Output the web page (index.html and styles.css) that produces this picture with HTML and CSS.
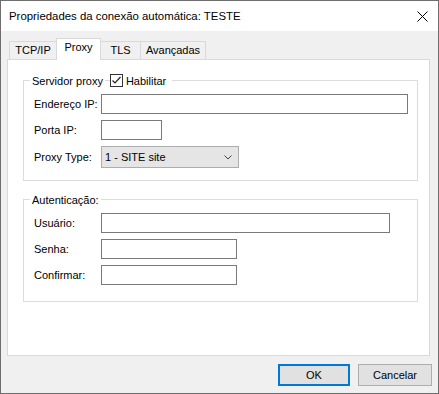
FILE: index.html
```html
<!DOCTYPE html>
<html lang="pt">
<head>
    <meta charset="UTF-8">
    <title>Propriedades da conexão automática: TESTE</title>
    <link rel="stylesheet" href="styles.css">
</head>
<body>
<div class="window">
    <div class="titlebar">
        <span class="title">Propriedades da conexão automática: TESTE</span>
        <svg class="close" width="11" height="11" viewBox="0 0 11 11">
            <path d="M0.5 0.5 L10.5 10.5 M10.5 0.5 L0.5 10.5" stroke="#000" stroke-width="1" fill="none"/>
        </svg>
    </div>
    <div class="client">
        <div class="tabs">
            <div class="tab tab-first">TCP/IP</div>
            <div class="tab tab-active">Proxy</div>
            <div class="tab tab-tls">TLS</div>
            <div class="tab tab-adv">Avançadas</div>
        </div>
        <div class="panel">
            <div class="group group-proxy">
                <div class="legend">
                    <span class="legend-text">Servidor proxy</span>
                    <span class="check">
                        <svg width="13" height="13" viewBox="0 0 13 13">
                            <rect x="0.5" y="0.5" width="12" height="12" fill="#fff" stroke="#333"/>
                            <polyline points="2.5,6.5 5,9 10.5,3" fill="none" stroke="#222" stroke-width="1.2"/>
                        </svg>
                        <span class="check-label">Habilitar</span>
                    </span>
                </div>
                <div class="row">
                    <label class="lbl">Endereço IP:</label>
                    <input class="edit edit-ip" type="text">
                </div>
                <div class="row">
                    <label class="lbl">Porta IP:</label>
                    <input class="edit edit-port" type="text">
                </div>
                <div class="row">
                    <label class="lbl">Proxy Type:</label>
                    <div class="combo">
                        <span>1 - SITE site</span>
                        <svg width="8" height="5" viewBox="0 0 8 5">
                            <polyline points="0.5,0.5 4,4 7.5,0.5" fill="none" stroke="#444" stroke-width="1"/>
                        </svg>
                    </div>
                </div>
            </div>
            <div class="group group-auth">
                <div class="legend">
                    <span class="legend-text">Autenticação:</span>
                </div>
                <div class="row">
                    <label class="lbl">Usuário:</label>
                    <input class="edit edit-user" type="text">
                </div>
                <div class="row">
                    <label class="lbl">Senha:</label>
                    <input class="edit edit-short" type="password">
                </div>
                <div class="row">
                    <label class="lbl">Confirmar:</label>
                    <input class="edit edit-short" type="password">
                </div>
            </div>
        </div>
        <div class="footer">
            <button class="btn btn-default">OK</button>
            <button class="btn btn-cancel">Cancelar</button>
        </div>
    </div>
</div>
</body>
</html>
```

FILE: styles.css
```css
* {
    box-sizing: border-box;
}
body {
    margin: 0;
    font-family: 'Liberation Sans', Arial, sans-serif;
    font-size: 11px;
    color: #000;
}
.window {
    width: 439px;
    height: 394px;
    border: 1px solid #6e6e6e;
    background-color: #f0f0f0;
    display: flex;
    flex-direction: column;
}
.titlebar {
    height: 30px;
    background-color: #fff;
    display: flex;
    align-items: center;
    justify-content: space-between;
    padding: 0 10px 0 8px;
}
.title {
    font-size: 11.4px;
}
.client {
    flex: 1;
    padding-top: 7px;
}
.tabs {
    display: flex;
    align-items: flex-end;
    height: 21px;
    padding-left: 8px;
}
.tab {
    height: 18px;
    border-top: 1px solid #d9d9d9;
    text-align: center;
    line-height: 16px;
    background-color: #f0f0f0;
}
.tab-first {
    width: 47px;
    border-left: 1px solid #d9d9d9;
}
.tab-active {
    position: relative;
    width: 45px;
    height: 22px;
    margin-bottom: -1px;
    border-left: 1px solid #d9d9d9;
    border-right: 1px solid #d9d9d9;
    background-color: #fff;
    line-height: 17px;
}
.tab-tls {
    width: 40px;
    border-right: 1px solid #d9d9d9;
}
.tab-adv {
    width: 65px;
    border-right: 1px solid #d9d9d9;
}
.panel {
    width: 423px;
    height: 297px;
    margin-left: 6px;
    border: 1px solid #d9d9d9;
    background-color: #fff;
    padding-top: 20px;
    padding-left: 15px;
}
.group {
    position: relative;
    width: 395px;
    border: 1px solid #dcdcdc;
    padding-left: 10px;
    display: flex;
    flex-direction: column;
    gap: 6px;
}
.group-proxy {
    height: 101px;
    padding-top: 13px;
}
.group-auth {
    height: 103px;
    margin-top: 18px;
    padding-top: 13px;
}
.legend {
    position: absolute;
    top: -8px;
    left: 6px;
    display: flex;
    align-items: center;
    height: 15px;
}
.legend-text {
    background-color: #fff;
    padding: 0 2px;
}
.check {
    display: flex;
    align-items: center;
    background-color: #fff;
    margin-left: 5px;
    padding-right: 6px;
}
.check svg {
    display: block;
}
.check-label {
    margin-left: 3px;
}
.row {
    display: flex;
    align-items: center;
}
.lbl {
    width: 67px;
}
.edit {
    height: 20px;
    border: 1px solid #7a7a7a;
    margin: 0;
    padding: 0 3px;
    font: inherit;
    background-color: #fff;
    outline: none;
}
.edit-ip {
    width: 307px;
}
.edit-port {
    width: 61px;
}
.edit-user {
    width: 289px;
}
.edit-short {
    width: 136px;
}
.combo {
    width: 138px;
    height: 22px;
    border: 1px solid #adadad;
    background-color: #e5e5e5;
    display: flex;
    align-items: center;
    justify-content: space-between;
    padding: 0 6px 0 3px;
}
.combo svg {
    display: block;
}
.footer {
    display: flex;
    justify-content: flex-end;
    gap: 8px;
    padding-top: 8px;
    padding-right: 6px;
}
.btn {
    height: 22px;
    margin: 0;
    padding: 0;
    font: inherit;
    color: #000;
    background-color: #e1e1e1;
    border: 1px solid #adadad;
}
.btn-default {
    width: 72px;
    border: 2px solid #0078d7;
}
.btn-cancel {
    width: 74px;
}
```
